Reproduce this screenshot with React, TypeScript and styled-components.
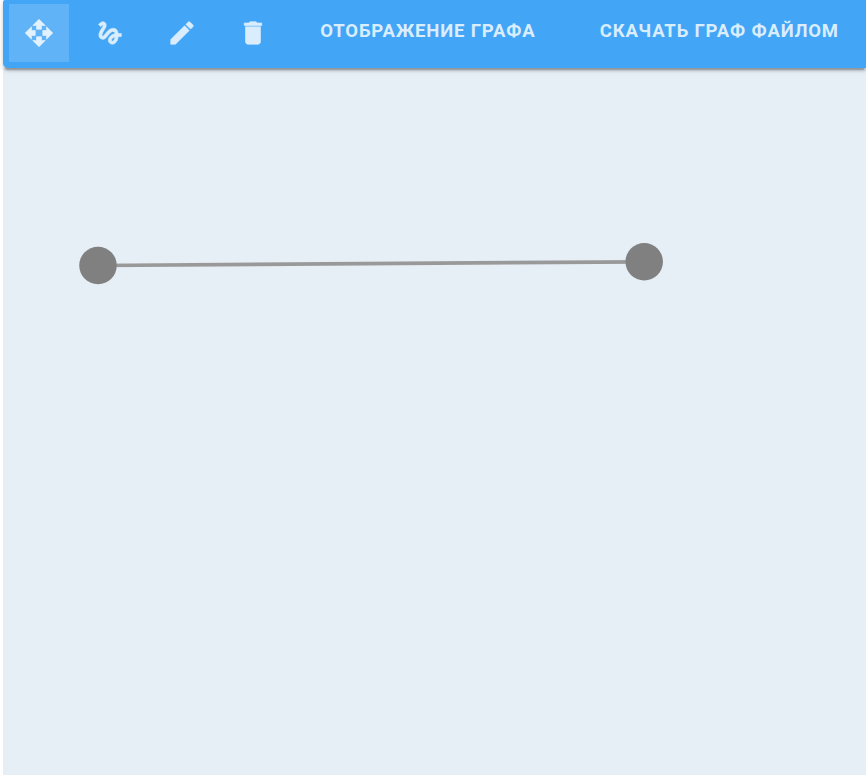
import { MdOpenWith, MdGesture, MdEdit, MdDelete } from "react-icons/md";
import styled, { createGlobalStyle } from "styled-components";

const GlobalStyle = createGlobalStyle`
  *, *::before, *::after { box-sizing: border-box; }
  body { margin: 0; background: #fff; font-family: Roboto, sans-serif; overflow: hidden; }
`;

const Page = styled.main`
  width: 100%;
  height: 775px;
  padding-left: 3px;
  display: flex;
  flex-direction: column;
`;

const Toolbar = styled.header`
  height: 68px;
  flex: none;
  display: flex;
  align-items: flex-start;
  padding: 0 0 0 6px;
  background: #42a5f6;
  border-radius: 2px 0 0 5px;
  box-shadow: 0 3.75px 1.25px -2.5px rgba(0, 0, 0, 0.2), 0 2.5px 2.5px rgba(0, 0, 0, 0.14),
    0 1.25px 6.25px rgba(0, 0, 0, 0.12);
  z-index: 1;
`;

const ToolButton = styled.button<{ $active?: boolean }>`
  width: 60px;
  height: 58px;
  flex: none;
  margin: 4px 11.35px 0 0;
  padding: 0;
  border: 0;
  display: flex;
  align-items: center;
  justify-content: center;
  font-size: 30px;
  color: ${(p) => (p.$active ? "#e1f1fe" : "#daedfd")};
  background: ${(p) => (p.$active ? "#60b3f7" : "transparent")};

  svg {
    stroke-width: 0.5;
  }

  path[fill="none"] {
    stroke: none;
  }
`;

const TextButton = styled.button<{ $width: number }>`
  width: ${(p) => p.$width}px;
  height: 62px;
  flex: none;
  padding: 0;
  border: 0;
  background: none;
  color: #daedfd;
  font: 700 18.5px Roboto, sans-serif;
  letter-spacing: 0.82px;
  text-align: center;
  white-space: nowrap;
`;

const Canvas = styled.section`
  flex: 1;
  min-height: 0;
  background: #e6eef6;
`;

const Graph = styled.svg`
  display: block;
  width: 863px;
  height: 707px;
`;

export default function App() {
  return (
    <Page>
      <GlobalStyle />
      <Toolbar>
        <ToolButton $active aria-label="Переместить"><MdOpenWith /></ToolButton>
        <ToolButton aria-label="Соединить"><MdGesture /></ToolButton>
        <ToolButton aria-label="Редактировать"><MdEdit /></ToolButton>
        <ToolButton aria-label="Удалить"><MdDelete /></ToolButton>
        <TextButton $width={267}>ОТОБРАЖЕНИЕ ГРАФА</TextButton>
        <TextButton $width={316}>СКАЧАТЬ ГРАФ ФАЙЛОМ</TextButton>
      </Toolbar>
      <Canvas>
        <Graph viewBox="3 68 863 707">
          <line x1="98" y1="265.5" x2="644.2" y2="261.8" stroke="#999" strokeWidth="3.75" />
          <circle cx="98" cy="265.5" r="18.75" fill="#808080" />
          <circle cx="644.2" cy="261.8" r="18.75" fill="#808080" />
        </Graph>
      </Canvas>
    </Page>
  );
}
